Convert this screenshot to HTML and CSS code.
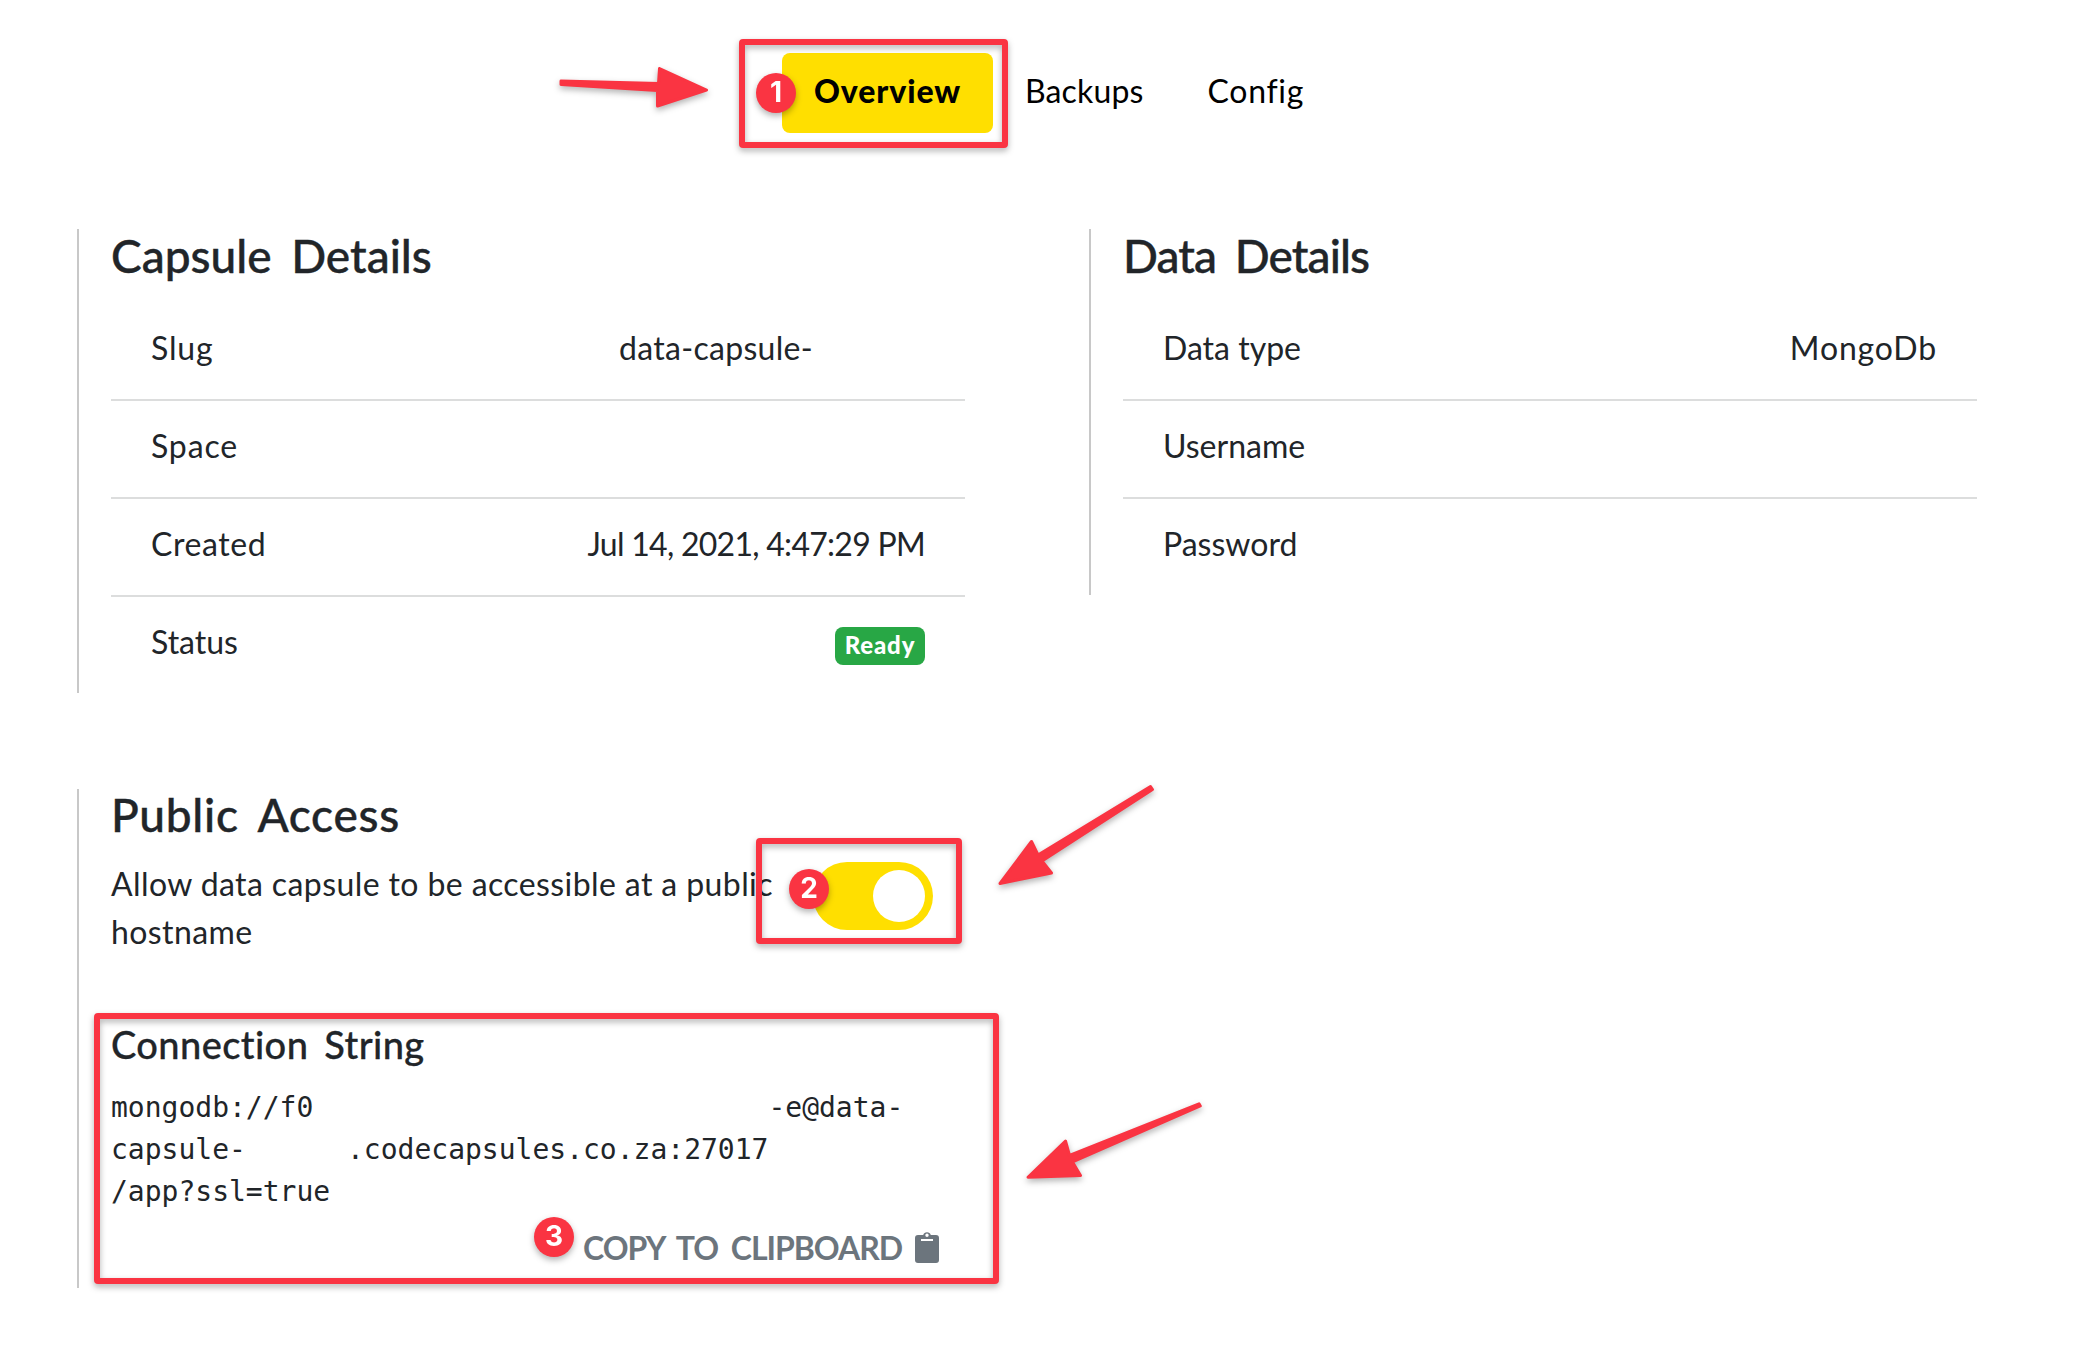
FILE: index.html
```html
<!DOCTYPE html>
<html lang="en">
<head>
<meta charset="utf-8">
<title>Data Capsule Overview</title>
<link rel="stylesheet" href="styles.css">
</head>
<body>
<nav class="tabs">
  <a class="tab tab-active">Overview</a>
  <a class="tab tab-backups">Backups</a>
  <a class="tab tab-config">Config</a>
</nav>
<main class="grid">
  <section class="panel">
    <h2 class="title">Capsule Details</h2>
    <div class="row"><span class="wide">Slug</span><span class="slug-value">data-capsule-</span></div>
    <div class="row"><span class="wide">Space</span></div>
    <div class="row"><span class="medium">Created</span><span class="date">Jul 14, 2021, 4:47:29 PM</span></div>
    <div class="row"><span>Status</span><span class="badge">Ready</span></div>
  </section>
  <section class="panel">
    <h2 class="title title-data">Data Details</h2>
    <div class="row"><span>Data type</span><span class="wide">MongoDb</span></div>
    <div class="row"><span>Username</span></div>
    <div class="row"><span>Password</span></div>
  </section>
  <section class="panel panel-access">
    <h2 class="title">Public Access</h2>
    <div class="access">
      <p class="access-text">Allow data capsule to be accessible at a public<br>hostname</p>
      <span class="toggle"><span class="knob"></span></span>
    </div>
    <h3 class="subtitle">Connection String</h3>
    <pre class="conn">mongodb://f0                           -e@data-
capsule-      .codecapsules.co.za:27017
/app?ssl=true</pre>
    <div class="copy"><span class="copy-label">COPY TO CLIPBOARD</span>
      <svg class="clip" viewBox="0 0 24 32"><path fill-rule="evenodd" d="M3 4H8.2A4 4 0 0 1 15.8 4H21A3 3 0 0 1 24 7V29A3 3 0 0 1 21 32H3A3 3 0 0 1 0 29V7A3 3 0 0 1 3 4ZM12 2.6A1.7 1.7 0 1 0 12 6A1.7 1.7 0 1 0 12 2.6ZM6 8V10H18V8Z"/></svg>
    </div>
  </section>
</main>
<div class="frame frame-1"></div>
<div class="frame frame-2"></div>
<div class="frame frame-3"></div>
<div class="step step-1">1</div>
<div class="step step-2">2</div>
<div class="step step-3">3</div>
<svg class="arrows" viewBox="0 0 2080 1352">
  <path d="M561 81V84.5L657.5 90.5L657.5 106L706.5 90L659.5 68.5L658.5 83.5Z"/>
  <path d="M1150.5 786.5L1152.5 789.5L1042 861L1051.5 873L1000 883.5L1031.5 841.5L1038 855Z"/>
  <path d="M1199 1103.8L1200.3 1106L1072.5 1162L1080.5 1175.5L1028 1177.3L1065.5 1141L1069.5 1155.5Z"/>
</svg>
</body>
</html>
```
FILE: styles.css
```css
* { box-sizing: border-box; }
body {
  margin: 0;
  width: 2080px;
  height: 1352px;
  position: relative;
  overflow: hidden;
  background: #fff;
  color: #212529;
  font: 32px/48px Lato, "Open Sans", sans-serif;
  font-variant-ligatures: none;
}
.tabs { display: flex; padding: 53px 0 0 782px; height: 229px; color: #000; }
.tab { height: 80px; padding: 14px 32px 0; white-space: nowrap; }
.tab-active { background: #ffdf00; border-radius: 8px; font-weight: 900; letter-spacing: .89px; }
.tab-backups { letter-spacing: .15px; }
.tab-config { letter-spacing: .7px; }
.grid {
  display: grid;
  grid-template-columns: 888px 888px;
  column-gap: 124px;
  row-gap: 96px;
  padding-left: 77px;
  align-items: start;
}
.panel { border-left: 2px solid #c8c8c8; padding-left: 32px; }
.title {
  margin: 0;
  height: 74px;
  font-size: 46px;
  line-height: 53px;
  font-weight: 500;
  word-spacing: 8px;
  white-space: nowrap;
  -webkit-text-stroke: .4px currentColor;
}
.title-data { letter-spacing: -.9px; }
.row {
  display: flex;
  justify-content: space-between;
  height: 98px;
  padding: 21px 40px 0;
  border-bottom: 2px solid #dcdddd;
  white-space: nowrap;
}
.row:last-child { height: 96px; border-bottom: 0; }
.wide { letter-spacing: .85px; }
.medium { letter-spacing: .6px; }
.date { letter-spacing: -.72px; }
.slug-value { margin-right: 112px; letter-spacing: .3px; }
.badge {
  height: 38px;
  width: 90px;
  margin-top: 9px;
  border-radius: 8px;
  background: #28a745;
  color: #fff;
  font-size: 24px;
  line-height: 35px;
  font-weight: 900;
  letter-spacing: .8px;
  text-align: center;
}
.panel-access { height: 499px; }
.panel-access .title { height: 70px; line-height: 51px; letter-spacing: .7px; }
.access { display: flex; justify-content: space-between; height: 156px; padding-right: 32px; }
.access-text { margin: 0; padding-top: 1px; white-space: nowrap; letter-spacing: .4px; }
.toggle { width: 120px; height: 68px; margin-top: 3px; border-radius: 34px; background: #ffdf00; padding: 8px; display: flex; justify-content: flex-end; }
.knob { width: 52px; height: 52px; border-radius: 50%; background: #fff; }
.subtitle {
  margin: 0;
  height: 72px;
  padding-top: 5px;
  font-size: 38px;
  line-height: 48px;
  font-weight: 500;
  letter-spacing: .4px;
  word-spacing: 6px;
  -webkit-text-stroke: .3px currentColor;
}
.conn { margin: 0; font: 28px/42px "DejaVu Sans Mono", monospace; }
.copy { display: flex; justify-content: flex-end; padding-right: 26px; gap: 13px; margin-top: 1px; font-weight: 700; color: #6c757d; }
.copy-label { padding-top: 10px; letter-spacing: -1.03px; word-spacing: 6px; }
.clip { width: 24px; height: 32px; margin-top: 17px; fill: #6c757d; }
.frame { position: absolute; border: 6px solid #fa3442; border-radius: 4px; filter: drop-shadow(0 3px 3px rgba(0,0,0,.3)); }
.frame-1 { left: 739px; top: 39px; width: 269px; height: 109px; }
.frame-2 { left: 756px; top: 838px; width: 206px; height: 106px; }
.frame-3 { left: 94px; top: 1013px; width: 905px; height: 271px; }
.step { position: absolute; width: 40px; height: 40px; border-radius: 50%; background: #fa3442; color: #fff; font: 700 28px/39px Inter, sans-serif; text-align: center; filter: drop-shadow(0 3px 3px rgba(0,0,0,.3)); }
.step-1 { left: 756px; top: 73px; }
.step-2 { left: 789px; top: 869px; }
.step-3 { left: 534px; top: 1217px; }
.arrows { position: absolute; left: 0; top: 0; width: 2080px; height: 1352px; fill: #fa3442; stroke: #fa3442; stroke-width: 3; stroke-linejoin: round; filter: drop-shadow(0 3px 3px rgba(0,0,0,.3)); }
```
